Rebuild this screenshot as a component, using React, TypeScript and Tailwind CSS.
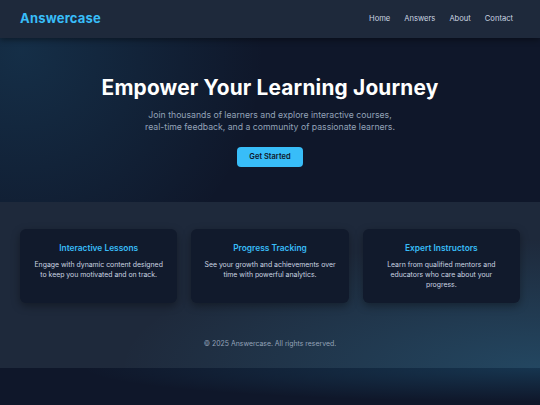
import React from "react";

const cards = [
  {
    title: "Interactive Lessons",
    desc: "Engage with dynamic content designed to keep you motivated and on track.",
  },
  {
    title: "Progress Tracking",
    desc: "See your growth and achievements over time with powerful analytics.",
  },
  {
    title: "Expert Instructors",
    desc: "Learn from qualified mentors and educators who care about your progress.",
  },
];

export default function App() {
  return (
    <div
      className="relative min-h-screen overflow-hidden bg-[#0f172a] text-white"
      style={{ fontFamily: "Inter, 'Noto Sans', sans-serif" }}
    >
      <header className="relative z-10 flex h-[38px] items-center justify-between bg-[#1e293b] pl-5 pr-[27px] shadow-[0_2px_6px_rgba(0,0,0,0.4)]">
        <div className="text-[13px] font-bold tracking-[0.2px] text-[#38bdf8]">Answercase</div>
        <nav className="flex items-center gap-[14px] text-[7.6px] text-[#cbd5e1]">
          <span>Home</span>
          <span>Answers</span>
          <span>About</span>
          <span>Contact</span>
        </nav>
      </header>

      <section className="relative flex h-[164px] flex-col items-center bg-[radial-gradient(circle_at_4%_8%,rgba(56,189,248,0.14),transparent_45%)] pt-[36px] shadow-[0_2px_4px_rgba(0,0,0,0.35)]">
        <h1 className="text-[20.8px] font-bold leading-[28px] tracking-[0.2px] text-white">
          Empower Your Learning Journey
        </h1>
        <p className="mt-[8px] text-center text-[8.7px] leading-[11.5px] text-[#94a3b8]">
          Join thousands of learners and explore interactive courses,
          <br />
          real-time feedback, and a community of passionate learners.
        </p>
        <button className="mt-[14px] h-[20px] w-[66px] rounded-[4px] bg-[#38bdf8] text-[7.5px] font-semibold text-[#0f172a]">
          Get Started
        </button>
      </section>

      <section className="relative bg-[#1e293b] bg-[radial-gradient(ellipse_at_100%_100%,rgba(56,189,248,0.2),transparent_55%)]">
        <div className="grid grid-cols-3 gap-[14px] px-5 pt-[27px] pb-[17px]">
          {cards.map((c) => (
            <div
              key={c.title}
              className="flex h-[74px] flex-col items-center rounded-[6px] bg-[#111a2c] px-[12px] pt-[13px] text-center shadow-[0_3px_8px_rgba(0,0,0,0.35)]"
            >
              <div className="text-[8.4px] font-semibold leading-[12px] text-[#38bdf8]">{c.title}</div>
              <p className="mt-[6px] text-[6.9px] leading-[10px] text-[#cbd5e1]">{c.desc}</p>
            </div>
          ))}
        </div>
        <footer className="flex h-[48px] items-center justify-center text-[6.9px] text-[#94a3b8]">
          © 2025 Answercase. All rights reserved.
        </footer>
      </section>

      <div className="h-[40px] bg-[radial-gradient(ellipse_at_100%_0%,rgba(56,189,248,0.18),transparent_60%)]" />
    </div>
  );
}
